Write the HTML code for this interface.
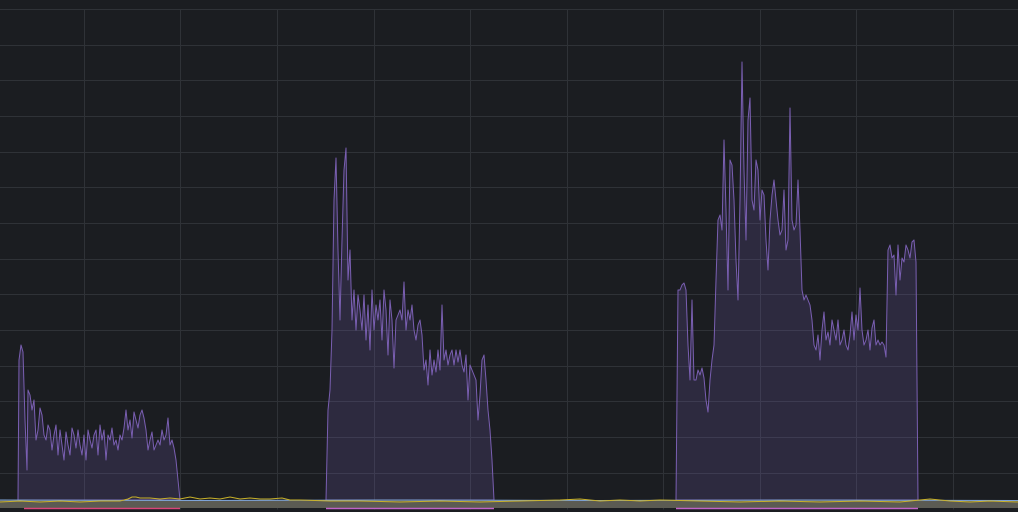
<!DOCTYPE html>
<html><head><meta charset="utf-8"><style>
html,body{margin:0;padding:0;background:#1b1d21;width:1018px;height:512px;overflow:hidden}
svg{display:block}
</style></head><body>
<svg width="1018" height="512" viewBox="0 0 1018 512" xmlns="http://www.w3.org/2000/svg">
<rect width="1018" height="512" fill="#1b1d21"/>
<g stroke="#2f3237" stroke-width="1" shape-rendering="crispEdges">
<line x1="0" y1="9.5" x2="1018" y2="9.5"/><line x1="0" y1="45.5" x2="1018" y2="45.5"/><line x1="0" y1="80.5" x2="1018" y2="80.5"/><line x1="0" y1="116.5" x2="1018" y2="116.5"/><line x1="0" y1="152.5" x2="1018" y2="152.5"/><line x1="0" y1="187.5" x2="1018" y2="187.5"/><line x1="0" y1="223.5" x2="1018" y2="223.5"/><line x1="0" y1="259.5" x2="1018" y2="259.5"/><line x1="0" y1="294.5" x2="1018" y2="294.5"/><line x1="0" y1="330.5" x2="1018" y2="330.5"/><line x1="0" y1="366.5" x2="1018" y2="366.5"/><line x1="0" y1="401.5" x2="1018" y2="401.5"/><line x1="0" y1="437.5" x2="1018" y2="437.5"/><line x1="0" y1="473.5" x2="1018" y2="473.5"/>
<line x1="84.5" y1="9" x2="84.5" y2="512"/><line x1="180.5" y1="9" x2="180.5" y2="512"/><line x1="277.5" y1="9" x2="277.5" y2="512"/><line x1="374.5" y1="9" x2="374.5" y2="512"/><line x1="470.5" y1="9" x2="470.5" y2="512"/><line x1="567.5" y1="9" x2="567.5" y2="512"/><line x1="663.5" y1="9" x2="663.5" y2="512"/><line x1="760.5" y1="9" x2="760.5" y2="512"/><line x1="856.5" y1="9" x2="856.5" y2="512"/><line x1="953.5" y1="9" x2="953.5" y2="512"/>
</g>
<g fill="rgba(120,95,185,0.2)" stroke="#7a5fb2" stroke-width="1" stroke-linejoin="round">
<polygon points="18,500 19,360 21,345 23,352 25,420 27,470 28,390 30,395 32,410 34,400 36,440 38,430 40,408 42,415 44,435 46,440 48,425 50,430 52,450 54,435 56,425 58,455 60,430 62,445 64,460 66,432 68,445 70,455 72,428 74,435 76,448 78,430 80,445 82,455 84,435 86,460 88,430 90,440 92,448 94,435 96,430 98,455 100,425 102,440 104,430 106,460 108,435 110,440 112,428 114,445 116,440 118,450 120,435 122,440 124,428 126,410 128,430 130,420 132,438 134,412 136,420 138,428 140,415 142,410 144,418 146,430 148,450 150,440 152,432 154,450 156,445 158,440 160,445 162,430 164,440 166,435 168,418 170,445 172,440 174,448 176,460 178,480 180,500"/>
<polygon points="326,500 328,410 330,390 332,330 334,200 336,158 338,250 340,320 342,240 344,170 346,148 348,280 350,250 352,320 354,290 356,330 358,295 360,310 362,330 364,295 366,340 368,305 370,350 372,290 374,330 376,305 378,320 380,300 382,340 384,290 386,310 388,355 390,300 392,320 394,368 396,320 398,315 400,310 402,320 404,282 406,330 408,310 410,320 412,305 414,330 416,340 418,325 420,320 422,335 424,370 426,360 428,385 430,350 432,375 434,360 436,372 438,350 440,370 442,305 444,360 446,350 448,365 450,355 452,350 454,365 456,350 458,362 460,350 462,365 464,372 466,355 468,400 470,365 472,370 474,375 476,380 478,420 480,395 482,360 484,355 486,380 488,410 490,430 492,460 494,500"/>
<polygon points="676,500 678,290 680,290 682,285 684,283 686,290 688,345 690,380 692,300 694,380 696,380 698,370 700,375 702,368 704,378 706,400 708,412 710,380 712,360 714,345 716,280 718,220 720,215 722,230 724,140 726,210 728,290 730,160 732,165 734,200 736,260 738,300 740,200 742,62 744,170 746,240 748,120 750,98 752,200 754,210 756,160 758,170 760,220 762,190 764,195 766,240 768,270 770,220 772,195 774,180 776,200 778,220 780,235 782,230 784,190 786,250 788,240 790,108 792,220 794,230 796,225 798,180 800,230 802,290 804,300 806,295 808,300 810,305 812,320 814,345 816,350 818,335 820,360 822,330 824,312 826,340 828,332 830,345 832,320 834,330 836,340 838,320 840,345 842,340 844,330 846,345 848,350 850,335 852,312 854,340 856,315 858,330 860,288 862,330 864,345 866,340 868,330 870,350 872,328 874,320 876,345 878,340 880,345 882,342 884,345 886,357 888,250 890,245 892,258 894,255 896,295 898,245 900,280 902,258 904,262 906,245 908,250 910,258 912,242 914,240 916,262 918,500"/>
</g>
<rect x="0" y="500" width="1018" height="8" fill="#5b5b53"/>
<polyline fill="none" stroke="#7ea3d6" stroke-width="1" points="0,500 200,500.5 400,500 600,500.5 800,500 1018,500.5"/>
<polyline fill="none" stroke="#c9b22a" stroke-width="1" points="0,502 20,501 40,502 60,501 80,502 100,501 120,501 128,499 132,497 136,497 140,498 150,498 160,499 170,498 180,499 190,497 200,499 210,498 220,499 230,497 240,499 250,498 260,499 270,499 282,498 290,500 300,500 330,501 360,501 400,502 440,501 480,502 520,501 560,500 580,499 600,501 620,500 640,501 660,500 700,501 740,502 780,501 820,502 860,501 900,502 920,500 930,499 950,501 970,502 990,501 1018,502"/>
<line x1="24" y1="508.5" x2="180" y2="508.5" stroke="#d9457a" stroke-width="1.5"/>
<line x1="326" y1="508.5" x2="494" y2="508.5" stroke="#c063c8" stroke-width="1.5"/>
<line x1="676" y1="508.5" x2="918" y2="508.5" stroke="#c063c8" stroke-width="1.5"/>
<rect x="0" y="509.5" width="1018" height="3" fill="#1b1d21"/>
</svg>
</body></html>
